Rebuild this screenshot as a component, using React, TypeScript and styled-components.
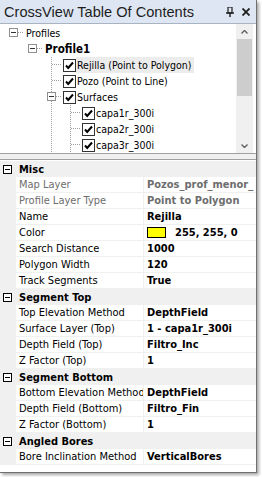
import React from "react"
import styled, { createGlobalStyle } from "styled-components"

const UI_FONT = `"DejaVu Sans Condensed", "Liberation Sans", Arial, sans-serif`

const GlobalStyle = createGlobalStyle`
  html, body {
    margin: 0;
    padding: 0;
    background: #ffffff;
  }
  body {
    font-family: "Liberation Sans", Arial, sans-serif;
  }
`

type Guide = "blank" | "pipe" | "tee" | "box" | "boxPipe"

interface TreeRowData {
	label: string
	guides: Guide[]
	bold?: boolean
	check?: boolean
	selected?: boolean
}

const treeRows: TreeRowData[] = [
	{ label: "Profiles", guides: ["box"] },
	{ label: "Profile1", guides: ["blank", "box"], bold: true },
	{ label: "Rejilla (Point to Polygon)", guides: ["blank", "blank", "tee"], check: true, selected: true },
	{ label: "Pozo (Point to Line)", guides: ["blank", "blank", "tee"], check: true },
	{ label: "Surfaces", guides: ["blank", "blank", "boxPipe"], check: true },
	{ label: "capa1r_300i", guides: ["blank", "blank", "pipe", "tee"], check: true },
	{ label: "capa2r_300i", guides: ["blank", "blank", "pipe", "tee"], check: true },
	{ label: "capa3r_300i", guides: ["blank", "blank", "pipe", "tee"], check: true },
]

interface PropData {
	name: string
	value: string
	readOnly?: boolean
	swatch?: string
}

interface SectionData {
	title: string
	props: PropData[]
}

const sections: SectionData[] = [
	{
		title: "Misc",
		props: [
			{ name: "Map Layer", value: "Pozos_prof_menor_", readOnly: true },
			{ name: "Profile Layer Type", value: "Point to Polygon", readOnly: true },
			{ name: "Name", value: "Rejilla" },
			{ name: "Color", value: "255, 255, 0", swatch: "#ffff00" },
			{ name: "Search Distance", value: "1000" },
			{ name: "Polygon Width", value: "120" },
			{ name: "Track Segments", value: "True" },
		],
	},
	{
		title: "Segment Top",
		props: [
			{ name: "Top Elevation Method", value: "DepthField" },
			{ name: "Surface Layer (Top)", value: "1 - capa1r_300i" },
			{ name: "Depth Field (Top)", value: "Filtro_Inc" },
			{ name: "Z Factor (Top)", value: "1" },
		],
	},
	{
		title: "Segment Bottom",
		props: [
			{ name: "Bottom Elevation Method", value: "DepthField" },
			{ name: "Depth Field (Bottom)", value: "Filtro_Fin" },
			{ name: "Z Factor (Bottom)", value: "1" },
		],
	},
	{
		title: "Angled Bores",
		props: [{ name: "Bore Inclination Method", value: "VerticalBores" }],
	},
]

const Page = styled.div`
	width: 262px;
	height: 477px;
	overflow: hidden;
	background: #ffffff;
`

const Frame = styled.div`
	width: 256px;
	height: 472px;
	border-right: 1px solid #6f6f6f;
	border-bottom: 1px solid #6f6f6f;
	box-shadow: 2px 2px 3px rgba(0, 0, 0, 0.35);
	display: flex;
	flex-direction: column;
	background: #ffffff;
	overflow: hidden;
`

const TitleBar = styled.div`
	height: 24px;
	flex: none;
	display: flex;
	align-items: center;
	padding: 0 6px 0 4px;
	background: #dde6f2;
	border-bottom: 1px solid #a9b4c2;
	box-sizing: border-box;
`

const Title = styled.div`
	flex: 1;
	font-size: 14.6px;
	color: #1e1e1e;
	white-space: nowrap;
`

const TitleButtons = styled.div`
	display: flex;
	align-items: center;
	gap: 8px;
`

const TreePane = styled.div`
	height: 130px;
	flex: none;
	display: flex;
	background: #ffffff;
	border-bottom: 1px solid #a0a0a0;
	box-sizing: border-box;
`

const TreeBody = styled.div`
	flex: 1;
	padding: 1px 0 0 4px;
	overflow: hidden;
	font-family: ${UI_FONT};
`

const TreeRow = styled.div`
	height: 16px;
	display: flex;
	align-items: center;
`

const GuideCell = styled.svg`
	width: 19px;
	height: 16px;
	flex: none;
	display: block;
`

const CheckBox = styled.svg`
	width: 13px;
	height: 13px;
	flex: none;
	margin-left: 2px;
	display: block;
`

const NodeLabel = styled.span<{ $bold?: boolean; $selected?: boolean; $check?: boolean }>`
	font-size: ${({ $bold }) => ($bold ? "11.5px" : "10.5px")};
	line-height: 16px;
	height: 16px;
	white-space: nowrap;
	color: #000000;
	font-weight: ${({ $bold }) => ($bold ? 700 : 400)};
	margin-left: ${({ $check }) => ($check ? "0" : "3px")};
	padding: 0 2px 0 ${({ $check }) => ($check ? "1px" : "0")};
	background: ${({ $selected }) => ($selected ? "#ececec" : "transparent")};
`

const ScrollBar = styled.div`
	width: 17px;
	flex: none;
	margin-right: 3px;
	display: flex;
	flex-direction: column;
	background: #f0f0f0;
`

const ScrollArrow = styled.div`
	height: 15px;
	display: flex;
	align-items: center;
	justify-content: center;
`

const ScrollThumb = styled.div`
	height: 57px;
	margin: 0 1px;
	background: #cdcdcd;
`

const ScrollTrack = styled.div`
	flex: 1;
`

const Splitter = styled.div`
	height: 5px;
	flex: none;
	background: #f0f0f0;
`

const Grid = styled.div`
	flex: 1;
	border-top: 1px solid #a0a0a0;
	background: #ffffff;
	padding-top: 1px;
	overflow: hidden;
	font-family: ${UI_FONT};
`

const CategoryRow = styled.div`
	height: 16px;
	display: flex;
	align-items: center;
	background: #f0f0f0;
	box-sizing: border-box;
`

const CategoryToggle = styled.svg`
	width: 9px;
	height: 9px;
	margin: 0 7px 0 3px;
	flex: none;
	display: block;
`

const CategoryTitle = styled.span`
	font-size: 11px;
	font-weight: 700;
	color: #000000;
	white-space: nowrap;
`

const PropRow = styled.div`
	height: 16px;
	display: grid;
	grid-template-columns: 16px 128px 1fr;
	box-sizing: border-box;
	border-bottom: 1px solid #f0f0f0;
`

const Gutter = styled.div`
	background: #f0f0f0;
`

const PropName = styled.div<{ $readOnly?: boolean }>`
	font-size: 11px;
	line-height: 15px;
	padding-left: 3px;
	white-space: nowrap;
	overflow: hidden;
	border-right: 1px solid #f0f0f0;
	color: ${({ $readOnly }) => ($readOnly ? "#6d6d6d" : "#000000")};
`

const PropValue = styled.div<{ $readOnly?: boolean }>`
	font-size: 11px;
	line-height: 15px;
	font-weight: 700;
	padding-left: 3px;
	white-space: nowrap;
	overflow: hidden;
	display: flex;
	align-items: center;
	color: ${({ $readOnly }) => ($readOnly ? "#6d6d6d" : "#000000")};
`

const Swatch = styled.span<{ $color: string }>`
	width: 19px;
	height: 11px;
	flex: none;
	margin-right: 9px;
	border: 1px solid #000000;
	box-sizing: border-box;
	background: ${({ $color }) => $color};
`

const dot = { stroke: "#a0a0a0", strokeWidth: 1, strokeDasharray: "1 1" }

function Guides({ kind }: { kind: Guide }) {
	return (
		<GuideCell viewBox="0 0 19 16">
			{(kind === "pipe" || kind === "tee" || kind === "boxPipe") && <line x1="9.5" y1="0" x2="9.5" y2="16" {...dot} />}
			{(kind === "tee" || kind === "box" || kind === "boxPipe") && <line x1="10" y1="7.5" x2="19" y2="7.5" {...dot} />}
			{(kind === "box" || kind === "boxPipe") && (
				<g>
					<rect x="5.5" y="3.5" width="8" height="8" fill="#ffffff" stroke="#8e8f8f" />
					<line x1="7" y1="7.5" x2="12" y2="7.5" stroke="#333333" />
				</g>
			)}
		</GuideCell>
	)
}

function Check() {
	return (
		<CheckBox viewBox="0 0 13 13">
			<rect x="0.5" y="0.5" width="12" height="12" fill="#ffffff" stroke="#333333" />
			<path d="M3 6.5 L5.2 9 L10 3.5" fill="none" stroke="#000000" strokeWidth="2" />
		</CheckBox>
	)
}

function Pin() {
	return (
		<svg width="8" height="10" viewBox="0 0 8 10">
			<rect x="2" y="0" width="4" height="6" fill="none" stroke="#1e1e1e" strokeWidth="1.2" />
			<line x1="0" y1="6" x2="8" y2="6" stroke="#1e1e1e" strokeWidth="1.4" />
			<line x1="4" y1="6" x2="4" y2="10" stroke="#1e1e1e" strokeWidth="1.4" />
		</svg>
	)
}

function Close() {
	return (
		<svg width="8" height="8" viewBox="0 0 8 8">
			<path d="M0.5 0.5 L7.5 7.5 M7.5 0.5 L0.5 7.5" stroke="#1e1e1e" strokeWidth="1.8" />
		</svg>
	)
}

function Chevron({ up }: { up?: boolean }) {
	return (
		<svg width="7" height="4" viewBox="0 0 7 4">
			<path d={up ? "M0.5 3.5 L3.5 0.5 L6.5 3.5" : "M0.5 0.5 L3.5 3.5 L6.5 0.5"} fill="none" stroke="#606060" strokeWidth="1.4" />
		</svg>
	)
}

function MinusBox() {
	return (
		<CategoryToggle viewBox="0 0 9 9">
			<rect x="0.5" y="0.5" width="8" height="8" fill="#ffffff" stroke="#000000" />
			<line x1="2" y1="4.5" x2="7" y2="4.5" stroke="#000000" />
		</CategoryToggle>
	)
}

export default function App() {
	return (
		<Page>
			<GlobalStyle />
			<Frame>
				<TitleBar>
					<Title>CrossView Table Of Contents</Title>
					<TitleButtons>
						<Pin />
						<Close />
					</TitleButtons>
				</TitleBar>
				<TreePane>
					<TreeBody>
						{treeRows.map((row) => (
							<TreeRow key={row.label}>
								{row.guides.map((g, i) => (
									<Guides key={i} kind={g} />
								))}
								{row.check && <Check />}
								<NodeLabel $bold={row.bold} $selected={row.selected} $check={row.check}>
									{row.label}
								</NodeLabel>
							</TreeRow>
						))}
					</TreeBody>
					<ScrollBar>
						<ScrollArrow>
							<Chevron up />
						</ScrollArrow>
						<ScrollThumb />
						<ScrollTrack />
						<ScrollArrow>
							<Chevron />
						</ScrollArrow>
					</ScrollBar>
				</TreePane>
				<Splitter />
				<Grid>
					{sections.map((s) => (
						<React.Fragment key={s.title}>
							<CategoryRow>
								<MinusBox />
								<CategoryTitle>{s.title}</CategoryTitle>
							</CategoryRow>
							{s.props.map((p) => (
								<PropRow key={p.name}>
									<Gutter />
									<PropName $readOnly={p.readOnly}>{p.name}</PropName>
									<PropValue $readOnly={p.readOnly}>
										{p.swatch && <Swatch $color={p.swatch} />}
										{p.value}
									</PropValue>
								</PropRow>
							))}
						</React.Fragment>
					))}
				</Grid>
			</Frame>
		</Page>
	)
}
